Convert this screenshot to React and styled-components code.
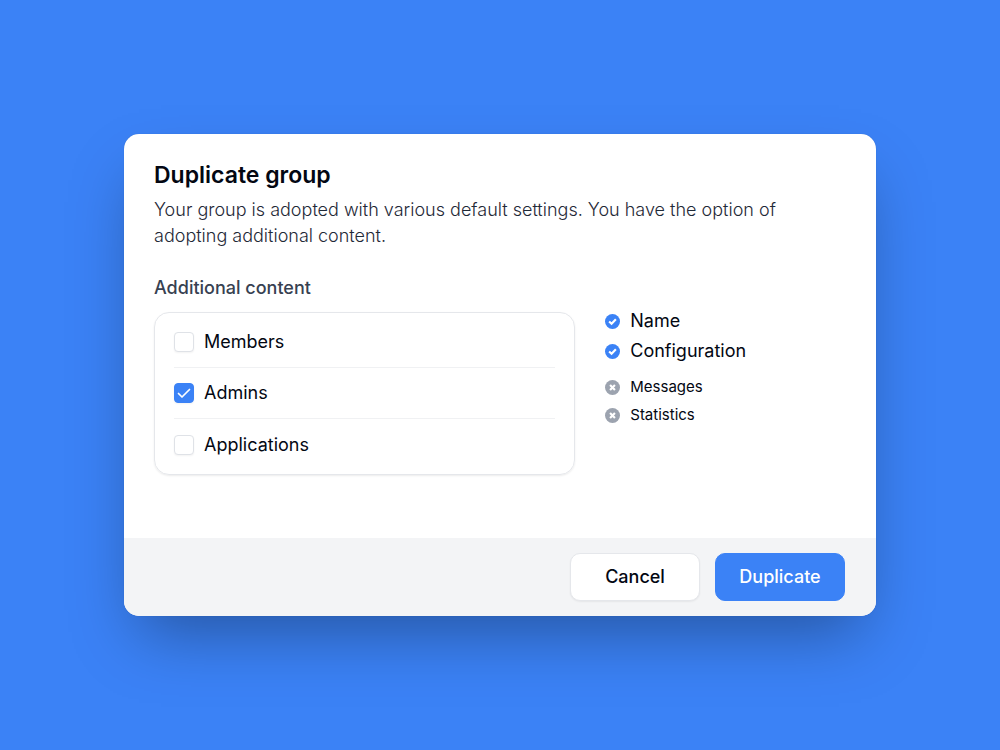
import React, { useState } from 'react';
import styled, { createGlobalStyle, css } from 'styled-components';

const GlobalStyle = createGlobalStyle`
  *, *::before, *::after {
    box-sizing: border-box;
  }

  body {
    margin: 0;
    background: #3b82f6;
    color: #030712;
    font-family: Inter, "Liberation Sans", sans-serif;
    font-size: 18px;
    line-height: 26px;
    -webkit-font-smoothing: antialiased;
  }
`

const Page = styled.main`
  display: flex;
  align-items: center;
  justify-content: center;
  min-height: 100vh;
  padding: 24px;
`

const Dialog = styled.form`
  width: 100%;
  max-width: 752px;
  overflow: hidden;
  border-radius: 15px;
  background: #fff;
  box-shadow: 0 31px 62px -15px rgba(0, 0, 0, 0.35), 0 0 1px rgba(0, 0, 0, 0.2);
`

const Body = styled.div`
  padding: 27px 30px 63px;
`

const Title = styled.h1`
  margin: 0 0 8px;
  font-size: 23px;
  font-weight: 600;
  line-height: 28px;
`

const Description = styled.p`
  margin: 0 0 26px;
  color: #1f2937;
  font-weight: 300;
`

const Columns = styled.div`
  display: grid;
  grid-template-columns: 7fr 4fr;
  column-gap: 30px;
  align-items: start;
`

const Options = styled.fieldset`
  min-width: 0;
  margin: 0;
  padding: 0;
  border: 0;
`

const Legend = styled.legend`
  margin-bottom: 11px;
  padding: 0;
  color: #374151;
  font-weight: 500;
`

const OptionList = styled.div`
  padding: 4px 19px;
  border: 1px solid #e5e7eb;
  border-radius: 15px;
  box-shadow: 0 1px 2px rgba(0, 0, 0, 0.08);
`

const Option = styled.label`
  display: flex;
  align-items: center;
  gap: 10px;
  height: 51px;
  border-bottom: 1px solid #f0f1f3;
  cursor: pointer;

  &:last-child {
    border-bottom: 0;
  }
`

const CheckboxCnt = styled.span`
  display: grid;
  width: 20px;
  height: 20px;

  > * {
    grid-area: 1 / 1;
  }
`

const Checkbox = styled.input`
  appearance: none;
  width: 20px;
  height: 20px;
  margin: 0;
  border: 1px solid #dfe2e7;
  border-radius: 4px;
  background: #fff;
  box-shadow: 0 1px 2px rgba(0, 0, 0, 0.05);
  cursor: pointer;

  &:checked {
    border-color: #3b82f6;
    background: #3b82f6;
  }
`

const CheckMark = styled.svg`
  width: 20px;
  height: 20px;
  fill: none;
  stroke: #fff;
  stroke-width: 1.7;
  stroke-linecap: round;
  stroke-linejoin: round;
  pointer-events: none;
`

const Summary = styled.div`
  display: grid;
  row-gap: 11px;
  padding-top: 33px;
`

const StatusList = styled.ul`
  display: grid;
  row-gap: 4px;
  margin: 0;
  padding: 0;
  list-style: none;

  ${props =>
    props.small &&
    css`
      font-size: 15px;
      line-height: 24px;
    `}
`

const StatusItem = styled.li`
  display: flex;
  align-items: center;
  gap: 10px;
`

const StatusSvg = styled.svg`
  flex: none;
  width: 15px;
  height: 15px;
  fill: none;
  stroke: #fff;
  stroke-width: 2.3;
`

const Footer = styled.footer`
  display: flex;
  justify-content: flex-end;
  gap: 15px;
  padding: 15px 31px;
  background: #f3f4f6;
`

const Button = styled.button`
  width: 130px;
  height: 48px;
  padding: 0;
  border: 1px solid #e5e7eb;
  border-radius: 10px;
  background: #fff;
  color: #030712;
  font: inherit;
  font-weight: 500;
  box-shadow: 0 1px 2px rgba(0, 0, 0, 0.06);
  cursor: pointer;

  ${props =>
    props.primary &&
    css`
      border-color: #3b82f6;
      background: #3b82f6;
      color: #fff;
      box-shadow: none;
    `}
`

const options = ['Members', 'Admins', 'Applications']

function StatusIcon({included}) {
  return (
    <StatusSvg viewBox="0 0 16 16" aria-hidden="true">
      <circle cx="8" cy="8" r="8" fill={included ? '#3b82f6' : '#9ca3af'} stroke="none" />
      <path d={included ? 'M4.4 8 7 10.4 11.6 5.6' : 'M5.4 5.4 10.6 10.6M10.6 5.4 5.4 10.6'} />
    </StatusSvg>
  )
}

function Status({items, included = false}) {
  return (
    <StatusList small={!included || undefined}>
      {items.map(item => (
        <StatusItem key={item}>
          <StatusIcon included={included} />
          {item}
        </StatusItem>
      ))}
    </StatusList>
  )
}

function App() {
  const [selected, setSelected] = useState(['Admins'])

  const toggle = name => {
    setSelected(selected.includes(name) ? selected.filter(item => item !== name) : [...selected, name])
  }

  return (
    <>
      <GlobalStyle />
      <Page>
        <Dialog role="dialog" aria-labelledby="dialog-title" onSubmit={ev => ev.preventDefault()}>
          <Body>
            <Title id="dialog-title">Duplicate group</Title>
            <Description>
              Your group is adopted with various default settings. You have the option of adopting additional content.
            </Description>

            <Columns>
              <Options>
                <Legend>Additional content</Legend>
                <OptionList>
                  {options.map(name => (
                    <Option key={name} htmlFor={`option-${name}`}>
                      <CheckboxCnt>
                        <Checkbox
                          type="checkbox"
                          id={`option-${name}`}
                          checked={selected.includes(name)}
                          onChange={() => toggle(name)}
                        />
                        {selected.includes(name) && (
                          <CheckMark viewBox="0 0 20 20" aria-hidden="true">
                            <path d="M4.5 10.5 8 14 15.5 6.5" />
                          </CheckMark>
                        )}
                      </CheckboxCnt>
                      {name}
                    </Option>
                  ))}
                </OptionList>
              </Options>

              <Summary>
                <Status items={['Name', 'Configuration']} included />
                <Status items={['Messages', 'Statistics']} />
              </Summary>
            </Columns>
          </Body>

          <Footer>
            <Button type="button">Cancel</Button>
            <Button type="submit" primary>Duplicate</Button>
          </Footer>
        </Dialog>
      </Page>
    </>
  )
}

export default App
